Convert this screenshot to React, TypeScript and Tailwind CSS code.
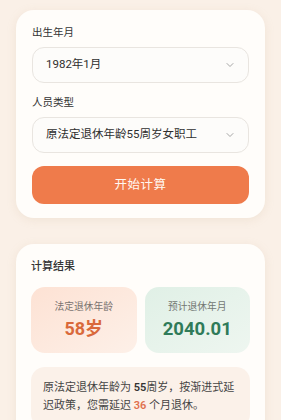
import React from "react";
import { ChevronDown } from "lucide-react";

const font = { fontFamily: 'Roboto, "Noto Sans CJK SC", sans-serif' };

function Field({ label, value, first }: { label: string; value: string; first?: boolean }) {
  return (
    <div className={first ? "" : "mt-[12px]"}>
      <div className="text-[10.5px] leading-[15px] text-[#333]">{label}</div>
      <div className="mt-[7px] h-[36px] rounded-[12px] border border-[#e9e5e0] bg-[#fdfcfa] flex items-center justify-between pl-[13px] pr-[12px]">
        <span className="text-[11.5px] text-[#2f2f2f]">{value}</span>
        <ChevronDown size={12} strokeWidth={1.6} className="text-[#8f8f8f]" />
      </div>
    </div>
  );
}

export default function App() {
  return (
    <div style={font} className="min-h-[420px] bg-[#faf0e7] px-4 pt-[10px] pb-6">
      <div className="rounded-[18px] bg-[#fffdfa] shadow-[0_2px_10px_rgba(200,170,140,0.18)] px-4 pt-[15px] pb-[14px]">
        <Field first label="出生年月" value="1982年1月" />
        <Field label="人员类型" value="原法定退休年龄55周岁女职工" />
        <button className="mt-[13px] w-full h-[38px] rounded-[12px] bg-[#ef7b4b] text-[#fff8f2] text-[12.5px] font-normal tracking-[0.5px]">
          开始计算
        </button>
      </div>

      <div className="mt-[26px] rounded-[18px] bg-[#fffdfa] shadow-[0_2px_10px_rgba(200,170,140,0.18)] px-[15px] pt-[15px] pb-[16px]">
        <div className="text-[11px] leading-[16px] font-medium text-[#333]">计算结果</div>
        <div className="mt-[12px] grid grid-cols-2 gap-[8px]">
          <div className="h-[66px] rounded-[14px] bg-gradient-to-br from-[#fde2d4] to-[#fdf0e8] flex flex-col items-center justify-center">
            <div className="text-[9.75px] leading-[13px] text-[#7a7370]">法定退休年龄</div>
            <div className="mt-[5px] text-[18px] leading-[22px] font-bold text-[#d9693b]">58岁</div>
          </div>
          <div className="h-[66px] rounded-[14px] bg-gradient-to-br from-[#e0f0e6] to-[#eef6f0] flex flex-col items-center justify-center">
            <div className="text-[9.75px] leading-[13px] text-[#737873]">预计退休年月</div>
            <div className="mt-[5px] text-[18.5px] leading-[22px] font-bold text-[#2f7b59]">2040.01</div>
          </div>
        </div>
        <div className="mt-[14px] rounded-[14px] bg-[#fbf1e9] px-[12px] pt-[12px] pb-[14px] text-[11px] leading-[17.5px] text-[#444]">
          <div className="whitespace-nowrap">
            <span>原法定退休年龄为 </span>
            <span className="font-semibold text-[#333]">55</span>
            <span>周岁，按渐进式延</span>
          </div>
          <div className="whitespace-nowrap">
            <span>迟政策，您需延迟 </span>
            <span className="font-semibold text-[#e0704d]">36</span>
            <span> 个月退休。</span>
          </div>
        </div>
      </div>
    </div>
  );
}
